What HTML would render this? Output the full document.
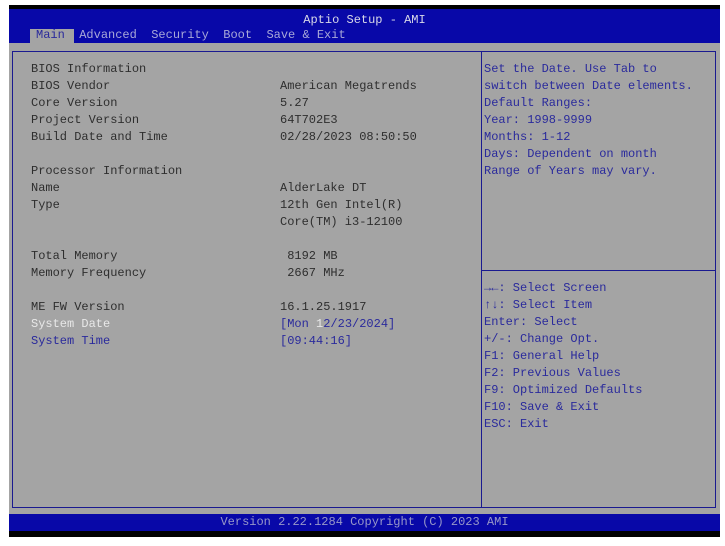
<html><head><style>
body{margin:0;width:725px;height:546px;background:#fff;position:relative;overflow:hidden;font-family:"Liberation Mono",monospace;font-size:12px}
.scr{position:absolute;left:9px;top:5px;width:711px;height:532px;background:#a4a4a4}
.t{position:absolute;white-space:pre;line-height:17px;color:#2e2e2e}
.b{color:#2a2a9c}
.w{color:#e8e8e8}
</style></head><body>
<div class="scr">
<div style="position:absolute;left:0;top:0;width:711px;height:4px;background:#000"></div>
<div style="position:absolute;left:0;top:4px;width:711px;height:34px;background:#0808a8"></div>
<div class="t" style="left:0;width:711px;text-align:center;top:7px;color:#d8d8e8">Aptio Setup - AMI</div>
<div style="position:absolute;left:21px;top:24px;width:44px;height:15px;background:#a4a4a4"></div>
<div class="t" style="left:27px;top:22px;color:#a8a8d8"><span style="color:#2a2a9c">Main</span>  Advanced  Security  Boot  Save &amp; Exit</div>
<div style="position:absolute;left:3px;top:46px;width:702px;height:455px;border:1px solid #1a1a90"></div>
<div style="position:absolute;left:472px;top:46px;width:1px;height:457px;background:#1a1a90"></div>
<div style="position:absolute;left:472px;top:265px;width:234px;height:1px;background:#1a1a90"></div>
<div class="t" style="left:22px;top:56px">BIOS Information
BIOS Vendor
Core Version
Project Version
Build Date and Time

Processor Information
Name
Type


Total Memory
Memory Frequency

ME FW Version
<span class="w">System Date</span>
<span class="b">System Time</span></div>
<div class="t" style="left:271px;top:73px">American Megatrends
5.27
64T702E3
02/28/2023 08:50:50


AlderLake DT
12th Gen Intel(R)
Core(TM) i3-12100

 8192 MB
 2667 MHz

16.1.25.1917
<span class="b">[Mon <span class="w">1</span>2/23/2024]</span>
<span class="b">[09:44:16]</span></div>
<div class="t b" style="left:475px;top:56px">Set the Date. Use Tab to
switch between Date elements.
Default Ranges:
Year: 1998-9999
Months: 1-12
Days: Dependent on month
Range of Years may vary.</div>
<div class="t b" style="left:475px;top:275px">→←: Select Screen
↑↓: Select Item
Enter: Select
+/-: Change Opt.
F1: General Help
F2: Previous Values
F9: Optimized Defaults
F10: Save &amp; Exit
ESC: Exit</div>
<div style="position:absolute;left:0;top:509px;width:711px;height:17px;background:#0808a8"></div>
<div class="t" style="left:0;width:711px;text-align:center;top:509px;color:#9898c8">Version 2.22.1284 Copyright (C) 2023 AMI</div>
<div style="position:absolute;left:0;top:526px;width:711px;height:6px;background:#000"></div>
</div>
</body></html>
